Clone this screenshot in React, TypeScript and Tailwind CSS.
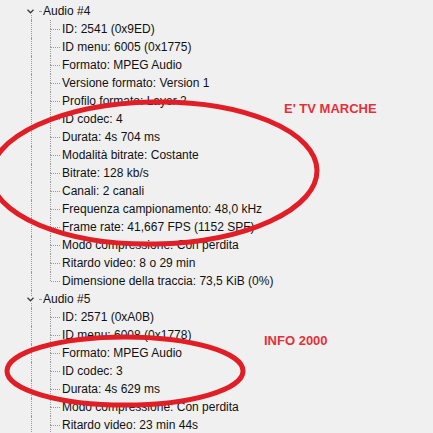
import React from 'react';

type Group = {
  title: string;
  items: string[];
  open?: boolean;
};

const groups: Group[] = [
  {
    title: 'Audio #4',
    items: [
      'ID: 2541 (0x9ED)',
      'ID menu: 6005 (0x1775)',
      'Formato: MPEG Audio',
      'Versione formato: Version 1',
      'Profilo formato: Layer 2',
      'ID codec: 4',
      'Durata: 4s 704 ms',
      'Modalità bitrate: Costante',
      'Bitrate: 128 kb/s',
      'Canali: 2 canali',
      'Frequenza campionamento: 48,0 kHz',
      'Frame rate: 41,667 FPS (1152 SPF)',
      'Modo compressione: Con perdita',
      'Ritardo video: 8 o 29 min',
      'Dimensione della traccia: 73,5 KiB (0%)',
    ],
  },
  {
    // list continues below the visible area
    title: 'Audio #5',
    open: true,
    items: [
      'ID: 2571 (0xA0B)',
      'ID menu: 6008 (0x1778)',
      'Formato: MPEG Audio',
      'ID codec: 3',
      'Durata: 4s 629 ms',
      'Modo compressione: Con perdita',
      'Ritardo video: 23 min 44s',
    ],
  },
];

const dot = 'border-dotted border-[#9a9a9a]';

const GroupRow: React.FC<{ title: string; first: boolean }> = ({ title, first }) => (
  <div className="flex h-[18px] items-stretch">
    <div className="w-[27px]" />
    {/* chevron with main line above/below */}
    <div className="flex w-[7px] flex-col items-center">
      <div className="flex h-[6px] w-[7px]">
        <div className="w-[4px]" />
        <div className={`h-full w-px ${first ? '' : `border-l ${dot}`}`} />
      </div>
      <svg width="7" height="5" viewBox="0 0 7 5" className="my-px">
        <polyline points="0.5,0.8 3.5,3.8 6.5,0.8" fill="none" stroke="#3c3c3c" strokeWidth="1.3" />
      </svg>
      <div className="flex w-[7px] flex-1">
        <div className="w-[4px]" />
        <div className={`h-full w-px border-l ${dot}`} />
      </div>
    </div>
    <div className="flex w-[9px] items-center">
      <div className="w-[5px]" />
      <div className={`w-[2px] border-t ${dot}`} />
    </div>
    <span className="flex items-center text-[12px] leading-none text-[#111]">{title}</span>
  </div>
);

const ItemRow: React.FC<{ text: string; last: boolean }> = ({ text, last }) => (
  <div className="flex h-[18px] items-stretch">
    <div className="w-[31px]" />
    <div className={`w-px border-l ${dot}`} />
    <div className="w-[18px]" />
    <div className="flex w-px flex-col">
      <div className={`h-[9px] border-l ${dot}`} />
      <div className={`flex-1 ${last ? '' : `border-l ${dot}`}`} />
    </div>
    <div className="flex w-[11px] items-center">
      <div className={`w-[9px] border-t ${dot}`} />
    </div>
    <span className="flex items-center whitespace-nowrap text-[12px] leading-none text-[#111]">{text}</span>
  </div>
);

export default function App() {
  return (
    <div
      className="relative h-[433px] w-[433px] overflow-hidden bg-[#f0f0f0] pt-[2px]"
      style={{ fontFamily: '"Liberation Sans", Arial, sans-serif' }}
    >
      <div className="flex flex-col">
        {groups.map((g, gi) => (
          <React.Fragment key={g.title}>
            <GroupRow title={g.title} first={gi === 0} />
            {g.items.map((it, i) => (
              <ItemRow key={i} text={it} last={!g.open && i === g.items.length - 1} />
            ))}
          </React.Fragment>
        ))}
      </div>

      {/* red annotations */}
      <svg className="pointer-events-none absolute inset-0" width="433" height="433" viewBox="0 0 433 433">
        <ellipse cx="154" cy="173" rx="163" ry="71" fill="none" stroke="#e11d26" strokeWidth="5" transform="rotate(-1 154 173)" />
        <ellipse cx="125" cy="371" rx="118" ry="34" fill="none" stroke="#e11d26" strokeWidth="5" />
      </svg>
      <span className="absolute left-[284px] top-[102px] text-[13px] font-bold leading-none text-[#e5303a]">
        E' TV MARCHE
      </span>
      <span className="absolute left-[264px] top-[334px] text-[13px] font-bold leading-none text-[#e5303a]">
        INFO 2000
      </span>
    </div>
  );
}
